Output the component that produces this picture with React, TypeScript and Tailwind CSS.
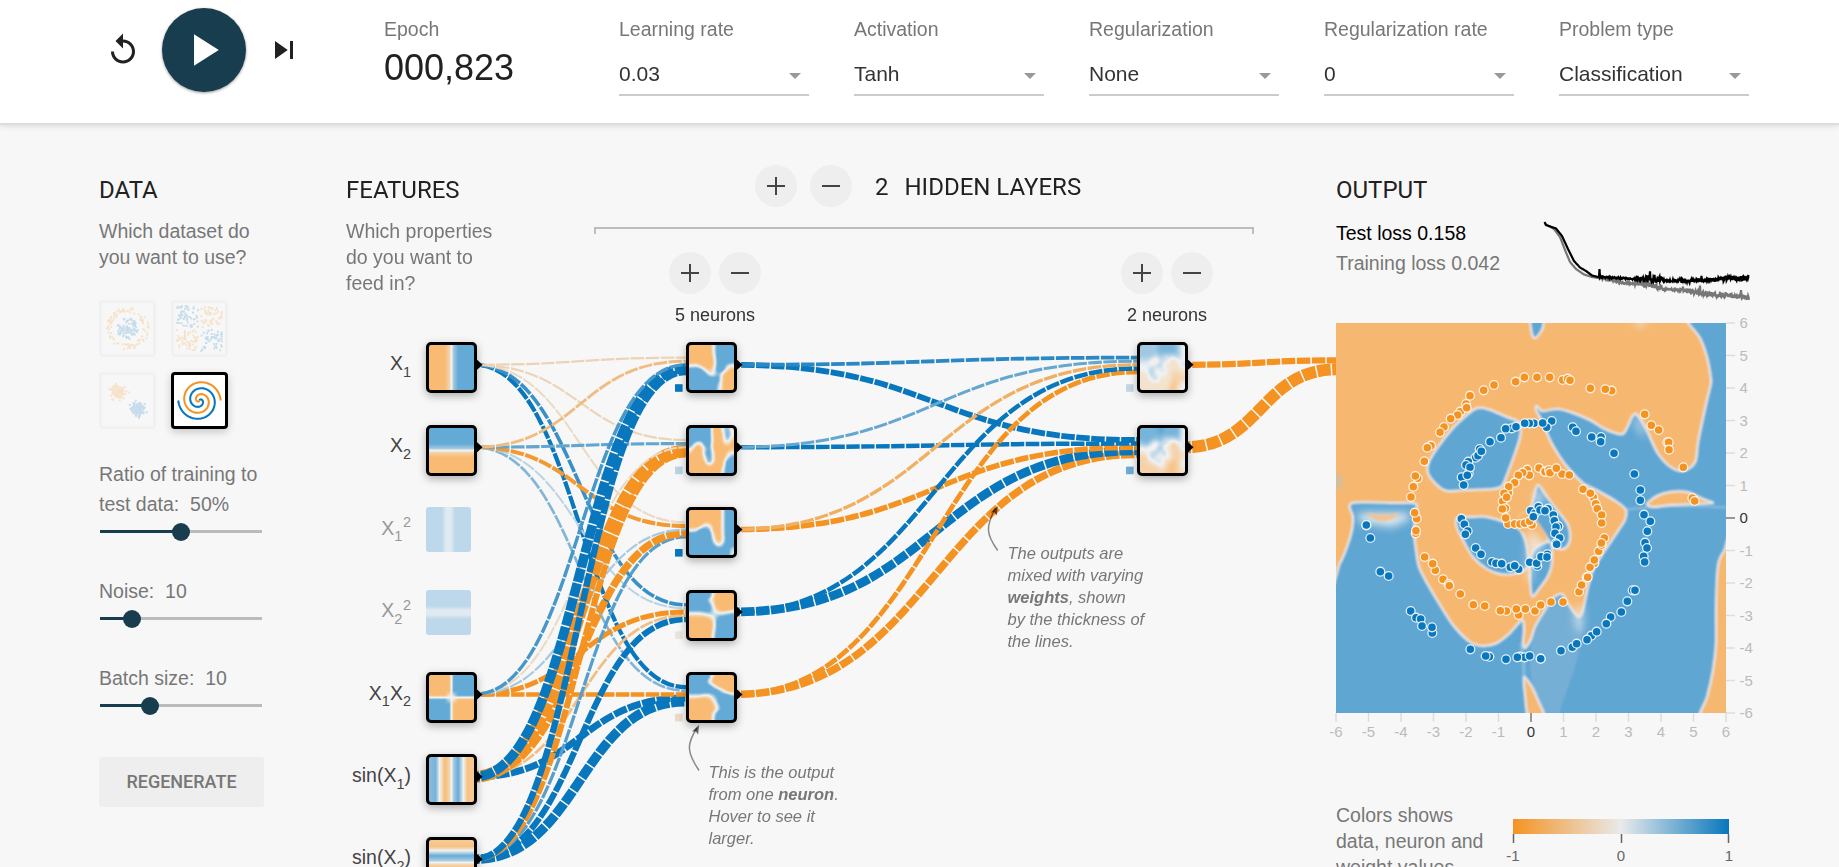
import React, { useEffect, useRef } from "react";

type Pt = [number, number];
type RGB = [number, number, number];

const ORANGE: RGB = [245, 147, 34];
const NEUTRAL: RGB = [232, 234, 235];
const BLUE: RGB = [8, 119, 189];

function mix(a: RGB, b: RGB, t: number): RGB {
  return [0, 1, 2].map((i) => Math.round(a[i] + (b[i] - a[i]) * t)) as RGB;
}

function weightColor(w: number): RGB {
  const v = Math.max(-1, Math.min(1, w));
  return v < 0 ? mix(NEUTRAL, ORANGE, -v) : mix(NEUTRAL, BLUE, v);
}

function css(c: RGB) {
  return `rgb(${c[0]},${c[1]},${c[2]})`;
}

function seeded(seed: number) {
  let s = seed;
  return () => {
    s = (s * 16807) % 2147483647;
    return s / 2147483647;
  };
}

/* ---------- Heat map thumbnails ---------- */

type Field = number[][];

const fromFn = (fn: (x: number, y: number) => number): Field =>
  Array.from({ length: 10 }, (_, r) =>
    Array.from({ length: 10 }, (_, c) => Math.max(-1, Math.min(1, fn(-5.4 + 1.2 * c, 5.4 - 1.2 * r))))
  );

const fromRows = (rows: string): Field =>
  rows
    .trim()
    .split(/\s+/)
    .map((row) => row.split("").map((ch) => (Number(ch) - 4) / 4));

const SIZE = 45;

/* Cubic B-spline weights for the four samples round a position. */
function splineWeights(t: number) {
  return [
    (1 - t) ** 3 / 6,
    (3 * t ** 3 - 6 * t * t + 4) / 6,
    (-3 * t ** 3 + 3 * t * t + 3 * t + 1) / 6,
    t ** 3 / 6,
  ];
}

function linearWeights(t: number) {
  return [0, 1 - t, t, 0];
}

function sample(field: Field, u: number, v: number, linear: boolean) {
  const weights = linear ? linearWeights : splineWeights;
  const cx = Math.floor(u);
  const cy = Math.floor(v);
  const wx = weights(u - cx);
  const wy = weights(v - cy);
  const clamp = (n: number) => Math.max(0, Math.min(9, n));
  let sum = 0;
  for (let j = 0; j < 4; j++)
    for (let i = 0; i < 4; i++) sum += wx[i] * wy[j] * field[clamp(cy - 1 + j)][clamp(cx - 1 + i)];
  return sum;
}

function HeatCanvas({ field, gain, linear }: { field: Field; gain: number; linear: boolean }) {
  const ref = useRef<HTMLCanvasElement>(null);
  useEffect(() => {
    const ctx = ref.current?.getContext("2d");
    if (!ctx) return;
    const img = ctx.createImageData(SIZE, SIZE);
    for (let y = 0; y < SIZE; y++) {
      for (let x = 0; x < SIZE; x++) {
        const v = sample(field, (x + 0.5) / 4.5 - 0.5, (y + 0.5) / 4.5 - 0.5, linear) * gain;
        const rgb = mix([255, 255, 255], weightColor(v), 160 / 255);
        const p = (y * SIZE + x) * 4;
        img.data[p] = rgb[0];
        img.data[p + 1] = rgb[1];
        img.data[p + 2] = rgb[2];
        img.data[p + 3] = 255;
      }
    }
    ctx.putImageData(img, 0, 0);
  }, [field, gain, linear]);
  return <canvas ref={ref} width={SIZE} height={SIZE} className="block h-[45px] w-[45px]" />;
}

/* ---------- Network ---------- */

const OX = 346;
const OY = 125;
const rowY = (i: number) => 364.8 + 82.4 * i;
const COLS = [426, 686, 1137];

interface NodeDef {
  col: number;
  row: number;
  field: Field;
  off?: boolean;
  bias?: number;
}

const FEATURES: NodeDef[] = [
  { col: 0, row: 0, field: fromFn((x) => x) },
  { col: 0, row: 1, field: fromFn((_, y) => y) },
  { col: 0, row: 2, field: fromFn((x) => x * x), off: true },
  { col: 0, row: 3, field: fromFn((_, y) => y * y), off: true },
  { col: 0, row: 4, field: fromFn((x, y) => x * y) },
  { col: 0, row: 5, field: fromFn((x) => Math.sin(x)) },
  { col: 0, row: 6, field: fromFn((_, y) => Math.sin(y)) },
];

const HIDDEN: NodeDef[] = [
  {
    col: 1, row: 0, bias: 1,
    field: fromRows(
      "0000048888 0000048888 0000038888 0000028888 3420028854 8884148831 8888437200 8888888200 8888886200 8888885200"
    ),
  },
  {
    col: 1, row: 1, bias: 0.2,
    field: fromRows(
      "8888810473 8888810284 8888820272 8428810231 5014810011 2006830024 1004830047 1002830188 0000200288 0000000488"
    ),
  },
  {
    col: 1, row: 2, bias: 1,
    field: fromRows(
      "0000000488 0000000488 0001100488 0015410488 4488710488 8888830488 8888840388 8888862588 8888887785 8888888884"
    ),
  },
  {
    col: 1, row: 3, bias: -0.07,
    field: fromRows(
      "8888830000 8888420000 8888730000 8888841001 4445654456 1111247888 0000038888 0000038888 0000048888 0000058888"
    ),
  },
  {
    col: 1, row: 4, bias: -0.18,
    field: fromRows(
      "8888720000 8888300000 8888851000 8888888410 5554467886 1100147888 0000026888 0000014888 0000048888 0000058888"
    ),
  },
  {
    col: 2, row: 0, bias: 0.17,
    field: fromRows(
      "6666777764 6666777764 6665655564 5542554244 4445633335 4464453333 3364443223 3346333222 3333333124 3333332134"
    ),
  },
  {
    col: 2, row: 1, bias: 0.55,
    field: fromRows(
      "7777877774 7777777774 7776755564 6753554144 4434733225 3456463223 2264444223 2235532124 2222431124 2222221123"
    ),
  },
];

const W1: number[][] = [
  [-0.27, -0.52, 0.72, 3.0, 1.8],
  [-0.25, 0.6, -0.2, -3.9, -1.7],
  [-0.2, -0.92, 0.28, -2.2, 0.65],
  [0.78, 0.2, -1.3, -0.5, 1.7],
  [1.0, 0.45, -1.1, 2.0, 3.0],
];
const W2: number[][] = [
  [0.85, 0.58, -0.68, 1.1, -1.2],
  [1.6, 1.1, -1.5, 2.7, -2.2],
];
const INPUT_ROWS = [0, 1, 4, 5, 6];

interface Link {
  d: string;
  w: number;
}

function makeLink(sx: number, sy: number, tx: number, ty: number, w: number): Link {
  const mx = (sx + tx) / 2;
  return { d: `M${sx},${sy}C${mx},${sy} ${mx},${ty} ${tx},${ty}`, w };
}

const LINKS: Link[] = [
  ...W1.flatMap((ws, i) =>
    ws.map((w, j) => makeLink(474, rowY(INPUT_ROWS[j]), 686, rowY(i) + (j - 2) * 3.6, w))
  ),
  ...W2.flatMap((ws, i) =>
    ws.map((w, j) => makeLink(734, rowY(j), 1137, rowY(i) + (j - 2) * 3.6, w))
  ),
  makeLink(1185, rowY(0), 1337, rowY(0) - 4.5, -1.75),
  makeLink(1185, rowY(1), 1337, rowY(0) + 4.5, -3.9),
].reverse();

const GAINS = [1, 1.5, 1.15];

function NodeBox({ node }: { node: NodeDef }) {
  const left = COLS[node.col] - OX;
  const top = rowY(node.row) - 22.5 - OY;
  return (
    <div
      className={
        node.off
          ? "absolute overflow-hidden rounded-[3px] opacity-40"
          : "absolute overflow-hidden rounded-[5px] border-[3px] border-black bg-black shadow-[0_3px_8px_rgba(0,0,0,0.3)]"
      }
      style={{ left, top: Math.round(top) }}
    >
      <HeatCanvas field={node.field} gain={GAINS[node.col]} linear={node.col === 0} />
    </div>
  );
}

function FeatureLabel({ row, children, off }: { row: number; children: React.ReactNode; off?: boolean }) {
  return (
    <text x={411} y={rowY(row) + 5.2} textAnchor="end" fontSize={19.5} fill={off ? "#999" : "#444"}>
      {children}
    </text>
  );
}

function Sub({ n, close = "" }: { n: string; close?: string }) {
  return (
    <>
      <tspan dy={6.5} fontSize={14.5}>{n}</tspan>
      {close && <tspan dy={-6.5}>{close}</tspan>}
    </>
  );
}

function Diagram() {
  return (
    <div className="absolute inset-0">
      <svg
        className="absolute inset-0 h-[742px] w-[990px]"
        viewBox="346 125 990 742"
        fontFamily="'Liberation Sans', Arial, sans-serif"
      >
        <path d="M595 234V228H1253V234" fill="none" stroke="#bdbdbd" strokeWidth="2" />
        {LINKS.map((l, i) => (
          <path
            key={i}
            d={l.d}
            fill="none"
            stroke={css(weightColor(l.w))}
            strokeWidth={1.5 * (1 + (9 * Math.min(5, Math.abs(l.w))) / 5)}
            strokeDasharray="13.5 1.5"
            strokeDashoffset="8"
          />
        ))}
        {HIDDEN.map((n, i) => (
          <rect
            key={i}
            x={COLS[n.col] - 11}
            y={rowY(n.row) + 19.4}
            width="7.6"
            height="7.6"
            fill={css(weightColor(n.bias ?? 0))}
          />
        ))}
        {[...FEATURES, ...HIDDEN]
          .filter((n) => !n.off)
          .map((n, i) => {
            const x = COLS[n.col] + 50;
            const y = rowY(n.row);
            return <path key={i} d={`M${x},${y - 6}l6.5,6l-6.5,6z`} fill="#000" />;
          })}
        <FeatureLabel row={0}>X<Sub n="1" /></FeatureLabel>
        <FeatureLabel row={1}>X<Sub n="2" /></FeatureLabel>
        <FeatureLabel row={2} off>
          X<Sub n="1" /><tspan dy={-14} dx={0.5} fontSize={14.5}>2</tspan>
        </FeatureLabel>
        <FeatureLabel row={3} off>
          X<Sub n="2" /><tspan dy={-14} dx={0.5} fontSize={14.5}>2</tspan>
        </FeatureLabel>
        <FeatureLabel row={4}>
          X<Sub n="1" close="X" /><Sub n="2" />
        </FeatureLabel>
        <FeatureLabel row={5}>sin(X<Sub n="1" close=")" /></FeatureLabel>
        <FeatureLabel row={6}>sin(X<Sub n="2" close=")" /></FeatureLabel>
      </svg>
      {[...FEATURES, ...HIDDEN].map((n, i) => (
        <NodeBox key={i} node={n} />
      ))}
      <svg className="absolute inset-0 h-[742px] w-[990px]" viewBox="346 125 990 742" fill="none">
        <path d="M997.7 550.5C986 534 985.5 527 995.5 508" stroke="#000" strokeOpacity=".45" strokeWidth="1.5" />
        <path d="M997.7 506l-7 6.5l3.7-.3l2.4 3.4z" fill="#000" fillOpacity=".6" />
        <path d="M699 770.5C686.5 752 686.5 744 697 728" stroke="#000" strokeOpacity=".45" strokeWidth="1.5" />
        <path d="M699 725l-7 6.5l3.7-.3l2.4 3.4z" fill="#000" fillOpacity=".6" />
      </svg>
      <p className="absolute left-[661.5px] top-[417px] text-[16.5px] leading-[22px] whitespace-nowrap text-[#777] italic">
        The outputs are<br />mixed with varying<br /><b>weights</b>, shown<br />by the thickness of<br />the lines.
      </p>
      <p className="absolute left-[362.5px] top-[636px] text-[16.5px] leading-[22px] whitespace-nowrap text-[#777] italic">
        This is the output<br />from one <b>neuron</b>.<br />Hover to see it<br />larger.
      </p>
    </div>
  );
}

/* ---------- Controls ---------- */

function RoundButton({ minus }: { minus?: boolean }) {
  return (
    <button className="flex h-[42px] w-[42px] shrink-0 items-center justify-center rounded-full bg-[#eeeeee]">
      <svg className="h-[18px] w-[18px]" viewBox="0 0 18 18" stroke="#444" strokeWidth="2">
        <path d={minus ? "M0 9H18" : "M0 9H18M9 0V18"} />
      </svg>
    </button>
  );
}

function NeuronControls({ label }: { label: string }) {
  return (
    <div className="flex w-[92px] flex-col items-center">
      <div className="flex gap-[8px]">
        <RoundButton />
        <RoundButton minus />
      </div>
      <div className="mt-[9px] whitespace-nowrap text-[18px] leading-[24px] text-[#333]">{label}</div>
    </div>
  );
}

function Select({ label, value }: { label: string; value: string }) {
  return (
    <div className="w-[190px]">
      <div className="text-[19.5px] leading-[26px] whitespace-nowrap text-[#777]">{label}</div>
      <div className="mt-[19px] flex h-[35px] items-start justify-between border-b-2 border-[#ccc] pr-[8px] text-[21px] leading-[26px] text-[#333]">
        {value}
        <svg className="mt-[12px] h-[6px] w-[12px]" viewBox="0 0 12 6" fill="#999">
          <path d="M0 0H12L6 6z" />
        </svg>
      </div>
    </div>
  );
}

function Header() {
  return (
    <header className="relative z-10 flex h-[125px] shrink-0 items-start border-b-2 border-[#ddd] bg-white shadow-[0_1px_6px_rgba(0,0,0,0.12)]">
      <div className="flex h-[100px] w-[384px] shrink-0 items-center pl-[105px]">
        <svg className="h-[36px] w-[36px]" viewBox="0 0 24 24" fill="#212121">
          <path d="M12 5V1L7 6l5 5V7c3.31 0 6 2.69 6 6s-2.69 6-6 6-6-2.69-6-6H4c0 4.42 3.58 8 8 8s8-3.58 8-8-3.58-8-8-8z" />
        </svg>
        <button className="ml-[21px] flex h-[84px] w-[84px] items-center justify-center rounded-full bg-[#183d4e] shadow-[0_1px_3px_rgba(0,0,0,0.4)]">
          <svg className="mr-[2px] h-[54px] w-[54px]" viewBox="0 0 24 24" fill="#fff">
            <path d="M8 5v14l11-7z" />
          </svg>
        </button>
        <svg className="ml-[20px] h-[36px] w-[36px]" viewBox="0 0 24 24" fill="#212121">
          <path d="M6 18l8.5-6L6 6v12zM16 6v12h2V6h-2z" />
        </svg>
      </div>
      <div className="flex gap-[45px] pt-[16px]">
        <div className="w-[190px]">
          <div className="text-[19.5px] leading-[26px] text-[#777]">Epoch</div>
          <div className="mt-[4.5px] text-[36px] leading-[42px] text-[#212121]">000,823</div>
        </div>
        <Select label="Learning rate" value="0.03" />
        <Select label="Activation" value="Tanh" />
        <Select label="Regularization" value="None" />
        <Select label="Regularization rate" value="0" />
        <Select label="Problem type" value="Classification" />
      </div>
    </header>
  );
}

/* ---------- Data column ---------- */

interface Mark {
  x: number;
  y: number;
  blue: boolean;
}

function circleMarks(): Mark[] {
  const rnd = seeded(7);
  return Array.from({ length: 200 }, (_, i) => {
    const blue = i % 2 === 0;
    const r = blue ? rnd() * 2.5 : 3.7 + rnd() * 1.3;
    const t = rnd() * Math.PI * 2;
    return { x: r * Math.cos(t), y: r * Math.sin(t), blue };
  });
}

function xorMarks(): Mark[] {
  const rnd = seeded(21);
  return Array.from({ length: 220 }, () => {
    let x = rnd() * 10 - 5;
    let y = rnd() * 10 - 5;
    x += x > 0 ? 0.3 : -0.3;
    y += y > 0 ? 0.3 : -0.3;
    return { x, y, blue: x * y > 0 };
  });
}

function gaussMarks(): Mark[] {
  const rnd = seeded(33);
  const n = () => (rnd() + rnd() + rnd() + rnd() - 2) * 1.4;
  return Array.from({ length: 220 }, (_, i) => {
    const blue = i % 2 === 0;
    return { x: (blue ? 2.4 : -2) + n(), y: (blue ? 2 : -1.9) + n(), blue };
  });
}

function Thumb({ marks }: { marks: Mark[] }) {
  return (
    <div className="h-[57px] w-[57px] rounded-[4px] border-[3px] border-[#f1f1f1]">
      <svg className="h-[51px] w-[51px] opacity-20" viewBox="-6 -6 12 12">
        {marks.map((m, i) => (
          <rect key={i} x={m.x - 0.23} y={m.y - 0.23} width=".46" height=".46" fill={m.blue ? "#0877bd" : "#f59322"} />
        ))}
      </svg>
    </div>
  );
}

function spiral(delta: number) {
  return Array.from({ length: 101 }, (_, i) => {
    const r = (i / 100) * 5;
    const t = 1.75 * (i / 100) * 2 * Math.PI + delta;
    return `${(r * Math.sin(t)).toFixed(3)},${(-r * Math.cos(t)).toFixed(3)}`;
  }).join(" ");
}

function Slider({ filled }: { filled: number }) {
  return (
    <div className="flex h-[18px] w-[163px] items-center pl-[1px]">
      <div className="h-[3px] bg-[#183d4e]" style={{ width: filled }} />
      <div className="relative z-10 -mx-[9px] h-[18px] w-[18px] shrink-0 rounded-full bg-[#183d4e]" />
      <div className="h-[3px] grow bg-[#bbb]" />
    </div>
  );
}

function Heading({ children }: { children: React.ReactNode }) {
  return <h2 className="font-[Roboto,sans-serif] text-[24px] leading-[27px] font-normal text-[#212121]">{children}</h2>;
}

function DataColumn() {
  return (
    <section className="w-[247px] shrink-0 pt-[51.5px] text-[19.5px] leading-[30px] text-[#777]">
      <Heading>DATA</Heading>
      <p className="mt-[14px] leading-[26px]">Which dataset do<br />you want to use?</p>
      <div className="mt-[30.5px] grid w-[129px] grid-cols-2 gap-[15px]">
        <Thumb marks={circleMarks()} />
        <Thumb marks={xorMarks()} />
        <Thumb marks={gaussMarks()} />
        <div className="h-[57px] w-[57px] rounded-[4px] border-[3px] border-black bg-white shadow-[0_3px_8px_rgba(0,0,0,0.2)]">
          <svg className="h-[51px] w-[51px]" viewBox="-6 -6 12 12" fill="none" strokeWidth=".48">
            <polyline points={spiral(0)} stroke="#0877bd" />
            <polyline points={spiral(Math.PI)} stroke="#f59322" />
          </svg>
        </div>
      </div>
      <div className="mt-[30px] mb-[3.5px] whitespace-nowrap">
        Ratio of training to<br />test data:&nbsp; 50%
      </div>
      <Slider filled={81} />
      <div className="mt-[35px] mb-[4px]">Noise:&nbsp; 10</div>
      <Slider filled={32} />
      <div className="mt-[35px] mb-[4px]">Batch size:&nbsp; 10</div>
      <Slider filled={50} />
      <button className="mt-[42.5px] h-[50px] w-[165px] rounded-[3px] bg-[#eeeeee] font-[Roboto,sans-serif] text-[18px] font-medium text-[#777]">
        REGENERATE
      </button>
    </section>
  );
}

/* ---------- Network column ---------- */

function NetworkColumn() {
  return (
    <section className="relative flex w-[990px] shrink-0">
      <Diagram />
      <div className="relative w-[248px] shrink-0 pt-[51.5px]">
        <Heading>FEATURES</Heading>
        <p className="mt-[14px] text-[19.5px] leading-[26px] text-[#777]">
          Which properties<br />do you want to<br />feed in?
        </p>
      </div>
      <div className="relative w-[660px] pt-[40px]">
        <div className="flex items-center gap-[13px] pl-[161px]">
          <RoundButton />
          <RoundButton minus />
          <div className="ml-[10px] flex gap-[16px] pt-[2px]">
            <Heading>2</Heading>
            <Heading>HIDDEN LAYERS</Heading>
          </div>
        </div>
        <div className="mt-[45px] flex justify-between pr-[41px] pl-[75px]">
          <NeuronControls label="5 neurons" />
          <NeuronControls label="2 neurons" />
        </div>
      </div>
    </section>
  );
}

/* ---------- Output column ---------- */

function lossPath(base: Pt[], noise: number, seed: number, spikes: Pt[]) {
  const rnd = seeded(seed);
  const pts: string[] = [];
  for (let x = base[0][0]; x <= 1749; x += 0.5) {
    let k = 0;
    while (k < base.length - 2 && base[k + 1][0] < x) k++;
    const [x0, y0] = base[k];
    const [x1, y1] = base[k + 1];
    let y = y0 + ((y1 - y0) * (x - x0)) / (x1 - x0);
    if (x > 1600) {
      const level = x < 1635 ? 0.5 : x < 1664 ? 1.5 : x < 1680 ? 0.6 : 1.2;
      y += (rnd() - 0.5) * noise * level;
    }
    for (const [sx, h] of spikes) if (Math.abs(x - sx) < 0.3) y -= h;
    pts.push(`${x},${y.toFixed(2)}`);
  }
  return pts.join(" ");
}

const TRAIN = lossPath(
  [[1545, 223], [1554, 228], [1560, 236], [1565, 249], [1570, 261], [1576, 268], [1584, 273.5], [1592, 276], [1610, 279], [1625, 282], [1650, 283], [1662, 288], [1690, 290], [1705, 292.5], [1720, 294], [1749, 296.5]],
  4, 11, [[1683, 6], [1700, 5], [1720, 4], [1741, 5]]
);
const TEST = lossPath(
  [[1544.5, 221], [1546, 224], [1556, 227.5], [1562, 235], [1568, 248], [1574, 260], [1580, 266.5], [1586, 270], [1592, 274.5], [1598, 276], [1636, 278], [1665, 279.5], [1700, 280], [1720, 278], [1749, 277]],
  3.8, 5, [[1599.5, 8], [1637.5, 4], [1646.5, 6], [1650, 6], [1654.5, 6], [1659.5, 4], [1701.5, 7], [1735, 3]]
);

interface Tile {
  dx: number;
  dy: number;
  pts: string;
}

const ORANGE_DOTS: Tile[] = [
  {
    dx: -48, dy: -69,
    pts: "522,255 491,271 450,287 438,312 421,335 440,323 413,345 392,356 372,381 360,397 333,437 322,443 313,484 293,535 286,528 280,560 273,591 290,656 284,638 587,245 613,232 651,232 689,232 622,509 657,504 674,515 628,526 608,518 595,526 584,548 565,578 566,560 552,580 548,604 560,592 556,625 547,627 564,672 557,654 584,672 600,672 614,670 636,675 629,664",
  },
  {
    dx: 582, dy: -69,
    pts: "98,240 113,236 120,241 181,265 245,272 226,268 344,343 364,376 386,390 412,427 416,427 417,449 460,502 487,594 494,603 45,515 57,510 60,518 96,522 79,505 118,525 159,568 190,592 181,580 197,611 202,626 215,645 215,669",
  },
  {
    dx: -48, dy: 561,
    pts: "287,70 288,62 314,141 346,181 338,161 369,208 386,222 388,227 421,252 460,284 494,288 559,303 541,302 596,315 589,297 616,297 645,303 662,285 693,276",
  },
  {
    dx: 582, dy: 561,
    pts: "99,276 147,245 155,225 170,202 173,202 193,160 180,172 193,150 206,124 215,105 223,84 214,99",
  },
];

const BLUE_DOTS: Tile[] = [
  {
    dx: -48, dy: -69,
    pts: "695,363 680,382 642,370 628,370 614,370 668,369 575,385 557,386 588,380 543,413 510,425 479,447 467,473 474,467 484,454 445,485 438,495 446,520 450,502 425,532 442,526 431,555 424,656 139,676 632,632 645,640 655,620 684,626 660,630 675,632 640,650 700,645 703,662",
  },
  {
    dx: 582, dy: -69,
    pts: "128,382 138,394 185,411 213,411 212,425 252,460 313,522 331,570 331,601 342,644 361,664 85,679",
  },
  {
    dx: -48, dy: 561,
    pts: "433,43 443,63 436,73 467,114 483,133 516,156 528,160 545,161 571,172 596,178 584,167 629,157 652,168 650,160 682,133 663,140 681,141 139,45 151,84 181,185 206,198 272,303 288,323 302,327 306,348 337,369 336,352 451,418 508,440 497,438 558,448 600,440 614,442 592,442 629,438 662,446",
  },
  {
    dx: 582, dy: 561,
    pts: "85,49 78,51 75,70 89,84 78,100 80,103 352,64 345,98 351,114 341,139 344,156 308,241 315,241 292,274 274,306 242,321 229,341 184,377 200,365 171,389 127,412 140,401 93,422 32,446",
  },
];

function Dots({ tiles, fill }: { tiles: Tile[]; fill: string }) {
  return (
    <g fill={fill} stroke="#fff" strokeOpacity=".85" strokeWidth="1.3">
      {tiles.flatMap((t, k) =>
        t.pts.split(" ").map((s, i) => {
          const [x, y] = s.split(",").map(Number);
          return <circle key={`${k}-${i}`} cx={(x + t.dx) / 3} cy={(y + t.dy) / 3} r="4.4" />;
        })
      )}
    </g>
  );
}

/* Closed Catmull-Rom curve through the listed points. */
function smooth(list: string) {
  const p = list.split(" ").map((s) => s.split(",").map(Number) as Pt);
  const n = p.length;
  let d = `M${p[0][0]},${p[0][1]}`;
  for (let i = 0; i < n; i++) {
    const a = p[(i - 1 + n) % n];
    const b = p[i];
    const c = p[(i + 1) % n];
    const e = p[(i + 2) % n];
    const c1 = [b[0] + (c[0] - a[0]) / 7, b[1] + (c[1] - a[1]) / 7];
    const c2 = [c[0] - (e[0] - b[0]) / 7, c[1] - (e[1] - b[1]) / 7];
    d += `C${c1[0].toFixed(1)},${c1[1].toFixed(1)} ${c2[0].toFixed(1)},${c2[1].toFixed(1)} ${c[0]},${c[1]}`;
  }
  return d + "z";
}

const MAIN_ORANGE =
  "-8,-8 346,-8 352,0 364,15 371,34 374,49 375,60 371,77 366,100 362,120 360,137 354,145 344,148 332,142 321,129 312,110 306,99 300,91 296,94 291,105 287,111 279,110 267,105 254,97 237,90 222,86 206,88 201,83 200,87 207,100 214,117 224,134 233,146 247,160 264,169 281,179 290,187 289,197 284,205 276,217 266,232 257,247 252,264 247,287 243,294 237,288 231,279 226,271 217,275 209,287 199,304 195,316 189,325 187,319 188,307 186,297 174,310 161,320 147,323 134,319 117,302 104,282 91,260 83,244 80,227 78,210 79,194 80,181 60,180 16,180 17,194 16,207 11,224 4,240 -8,254";

const BLUE_HOLES = [
  "147,85 157,88 171,94 184,100 184,114 179,130 172,149 166,163 157,166 131,167 111,168 101,162 92,150 93,139 102,124 117,105 131,92 139,86",
  "121,195 136,194 151,194 171,200 184,207 190,220 192,234 190,246 177,251 164,251 151,246 137,234 127,217 121,205",
  "202,162 211,174 221,187 231,200 234,210 233,220 227,226 217,223 207,209 199,198 195,190 198,174",
  "197,228 206,221 215,220 216,240 212,253 203,266 196,273 194,250",
  "195,-6 207,-6 207,4 204,10 199,15 196,11",
];

const ORANGE_ISLANDS = [
  "311,181 321,173 334,169 351,169 367,176 377,180 361,181 334,182 318,184",
  "396,220 388,228 383,238 381,254 380,287 380,320 377,347 371,374 364,396 396,396",
  "188,354 196,364 202,377 209,396 193,396 189,372",
];

function OutputMap() {
  const ticks = Array.from({ length: 13 }, (_, i) => i - 6);
  return (
    <svg
      className="-ml-[12px] h-[426px] w-[436px]"
      viewBox="-12 -8 436 426"
      fontFamily="'Liberation Sans', Arial, sans-serif"
      fontSize="15"
    >
      <defs>
        <clipPath id="plot"><rect width="390" height="390" /></clipPath>
        <filter id="soft" x="-5%" y="-5%" width="110%" height="110%"><feGaussianBlur stdDeviation="1.3" /></filter>
        <filter id="haze" x="-50%" y="-50%" width="200%" height="200%"><feGaussianBlur stdDeviation="4" /></filter>
      </defs>
      <g clipPath="url(#plot)">
        <g filter="url(#soft)" stroke="#e9edef" strokeWidth="2">
          <rect x="-20" y="-20" width="430" height="430" fill="#60a6d3" stroke="none" />
          <path d={smooth("196,318 217,277 231,281 246,302 240,340 228,375 220,398 209,398 196,360")} fill="#76afd6" stroke="none" />
          <path d="M290 186.5Q330 181 392 184.5" fill="none" strokeOpacity=".3" />
          <path d="M185 320Q188 336 188 356" fill="none" strokeWidth="3" strokeOpacity=".3" />
          <path d={smooth(MAIN_ORANGE)} fill="#f6b770" />
          {BLUE_HOLES.map((h) => <path key={h} d={smooth(h)} fill="#60a6d3" />)}
          {ORANGE_ISLANDS.map((h) => <path key={h} d={smooth(h)} fill="#f6b770" />)}
          <path d={smooth("186,190 196,192 205,204 211,216 197,222 189,212 180,202")} fill="#f6b770" strokeWidth="1" strokeOpacity=".4" />
        </g>
        <g filter="url(#haze)" fill="#eeeff0">
          <path d="M22 190H72L74 196L56 204L24 199z" fillOpacity=".9" />
          <path d="M192 206L208 218L204 228L196 232L196 258L191 258z" fillOpacity=".75" />
          <path d="M197 178L202 163L208 176L202 182z" fillOpacity=".8" />
          <path d="M239 282L247 284L246 312L240 304z" fillOpacity=".8" />
          <path d="M298 92L306 100L310 116L300 104z" fillOpacity=".7" />
          <rect x="-4" y="154" width="8" height="9" fill="#9cc7e2" />
          <rect x="300" y="-4" width="9" height="7" fillOpacity=".8" />
        </g>
        <path d="M30 190Q48 193 63 190Q56 199 46 198Q37 197 30 190z" fill="#f3c391" filter="url(#soft)" />
        <Dots tiles={ORANGE_DOTS} fill="#f59322" />
        <Dots tiles={BLUE_DOTS} fill="#0877bd" />
      </g>
      {ticks.map((t) => {
        const p = (t + 6) * 32.5;
        const zero = t === 0;
        return (
          <g key={t} stroke={zero ? "#999" : "#ddd"} strokeWidth={zero ? 2 : 1.5}>
            <path d={`M${p} 390v9M390 ${390 - p}h9`} />
            <g stroke="none" fill={zero ? "#333" : "#bbb"}>
              <text x={p} y="414" textAnchor="middle">{t}</text>
              <text x="403.5" y={390 - p + 5.3}>{t}</text>
            </g>
          </g>
        );
      })}
    </svg>
  );
}

function OutputColumn() {
  return (
    <section className="w-[424px] shrink-0 pt-[51.5px] text-[19.5px] leading-[30px]">
      <Heading>OUTPUT</Heading>
      <div className="flex h-[111.5px] items-start justify-between pt-[14px] pr-[11px]">
        <div className="whitespace-nowrap">
          <div className="text-black">Test loss 0.158</div>
          <div className="text-[#777]">Training loss 0.042</div>
        </div>
        <svg className="-mr-[1px] h-[84px] w-[208px]" viewBox="1542 217 208 84" fill="none" strokeWidth="2.2">
          <polyline points={TRAIN} stroke="#777" />
          <polyline points={TEST} stroke="#000" />
        </svg>
      </div>
      <OutputMap />
      <div className="mt-[61px] flex items-start">
        <p className="w-[165px] leading-[26px] whitespace-nowrap text-[#777]">
          Colors shows<br />data, neuron and<br />weight values.
        </p>
        <svg className="mt-[11.5px] h-[60px] w-[240px]" viewBox="1501 814 240 60" fontFamily="'Liberation Sans', Arial, sans-serif" fontSize="15">
          <defs>
            <linearGradient id="scale">
              <stop offset="0" stopColor="#f59322" />
              <stop offset=".5" stopColor="#e8eaeb" />
              <stop offset="1" stopColor="#0877bd" />
            </linearGradient>
          </defs>
          <rect x="1513" y="819" width="216" height="15" fill="url(#scale)" />
          <path d="M1513.5 834v9M1621.5 834v9M1728.5 834v9" stroke="#666" strokeWidth="1.5" />
          <g fill="#666" textAnchor="middle">
            <text x="1513" y="861">-1</text>
            <text x="1621" y="861">0</text>
            <text x="1729" y="861">1</text>
          </g>
        </svg>
      </div>
    </section>
  );
}

export default function App() {
  return (
    <div className="flex h-[867px] w-[1839px] flex-col overflow-hidden bg-[#f7f7f7] font-['Liberation_Sans',Arial,sans-serif]">
      <Header />
      <main className="flex h-[742px] overflow-hidden pl-[99px]">
        <DataColumn />
        <NetworkColumn />
        <OutputColumn />
      </main>
    </div>
  );
}
